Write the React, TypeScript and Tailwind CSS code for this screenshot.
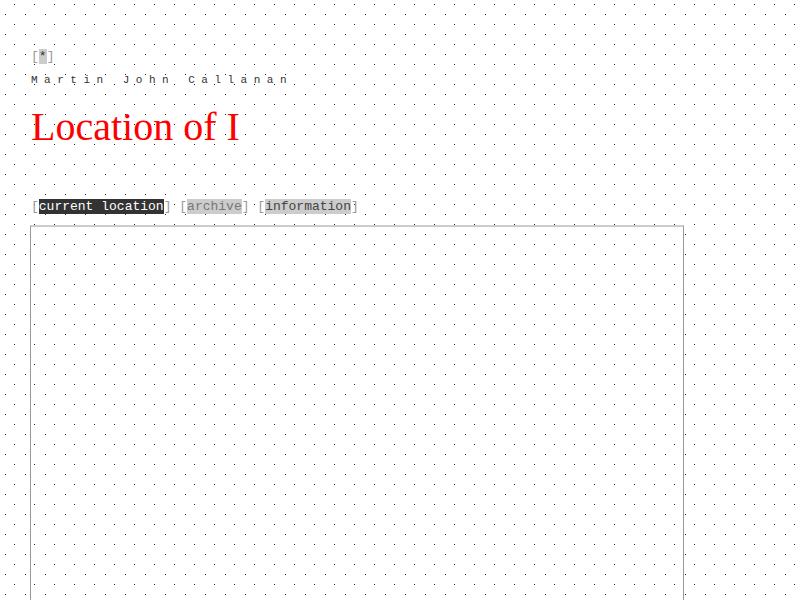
export default function App() {
  const tabs = [
    { label: "current location", text: "text-white", bg: "bg-[#333]" },
    { label: "archive", text: "text-[#777]", bg: "bg-[#ccc]" },
    { label: "information", text: "text-[#444]", bg: "bg-[#ccc]" },
  ]

  return (
    <div className="min-h-screen bg-white bg-[radial-gradient(circle_at_14.5px_4.5px,#222_0.7px,transparent_0.7px),radial-gradient(circle_at_5.5px_14.5px,#222_0.7px,transparent_0.7px)] bg-[length:20px_20px] pl-[31px] pt-[48px]">
      {/* Home link */}
      <div className="font-['Liberation_Mono',monospace] text-[13px] leading-[18px] text-[#999]">
        [<span className="bg-[#ccc] text-[#333]">*</span>]
      </div>

      {/* Author */}
      <div className="mt-[7px] font-['Liberation_Mono',monospace] text-[11px] leading-[14px] tracking-[6.5px] text-[#333]">
        Martin John Callanan
      </div>

      {/* Title */}
      <h1 className="mt-[17px] font-['Liberation_Serif',serif] text-[40px] leading-[46px] text-[#f00]">
        Location of I
      </h1>

      {/* Tabs */}
      <div className="mt-[49px] flex font-['Liberation_Mono',monospace] text-[13px] leading-[16px] text-[#999]">
        {tabs.map((t, i) => (
          <span key={t.label} className="whitespace-pre">
            [<span className={`${t.bg} ${t.text}`}>{t.label}</span>]{i < tabs.length - 1 ? " " : ""}
          </span>
        ))}
      </div>

      {/* Map frame */}
      <div className="mt-[10px] -ml-[1px] h-[420px] w-[654px] border-x border-[#999] border-t-2 border-t-[#ccc]" />
    </div>
  )
}
